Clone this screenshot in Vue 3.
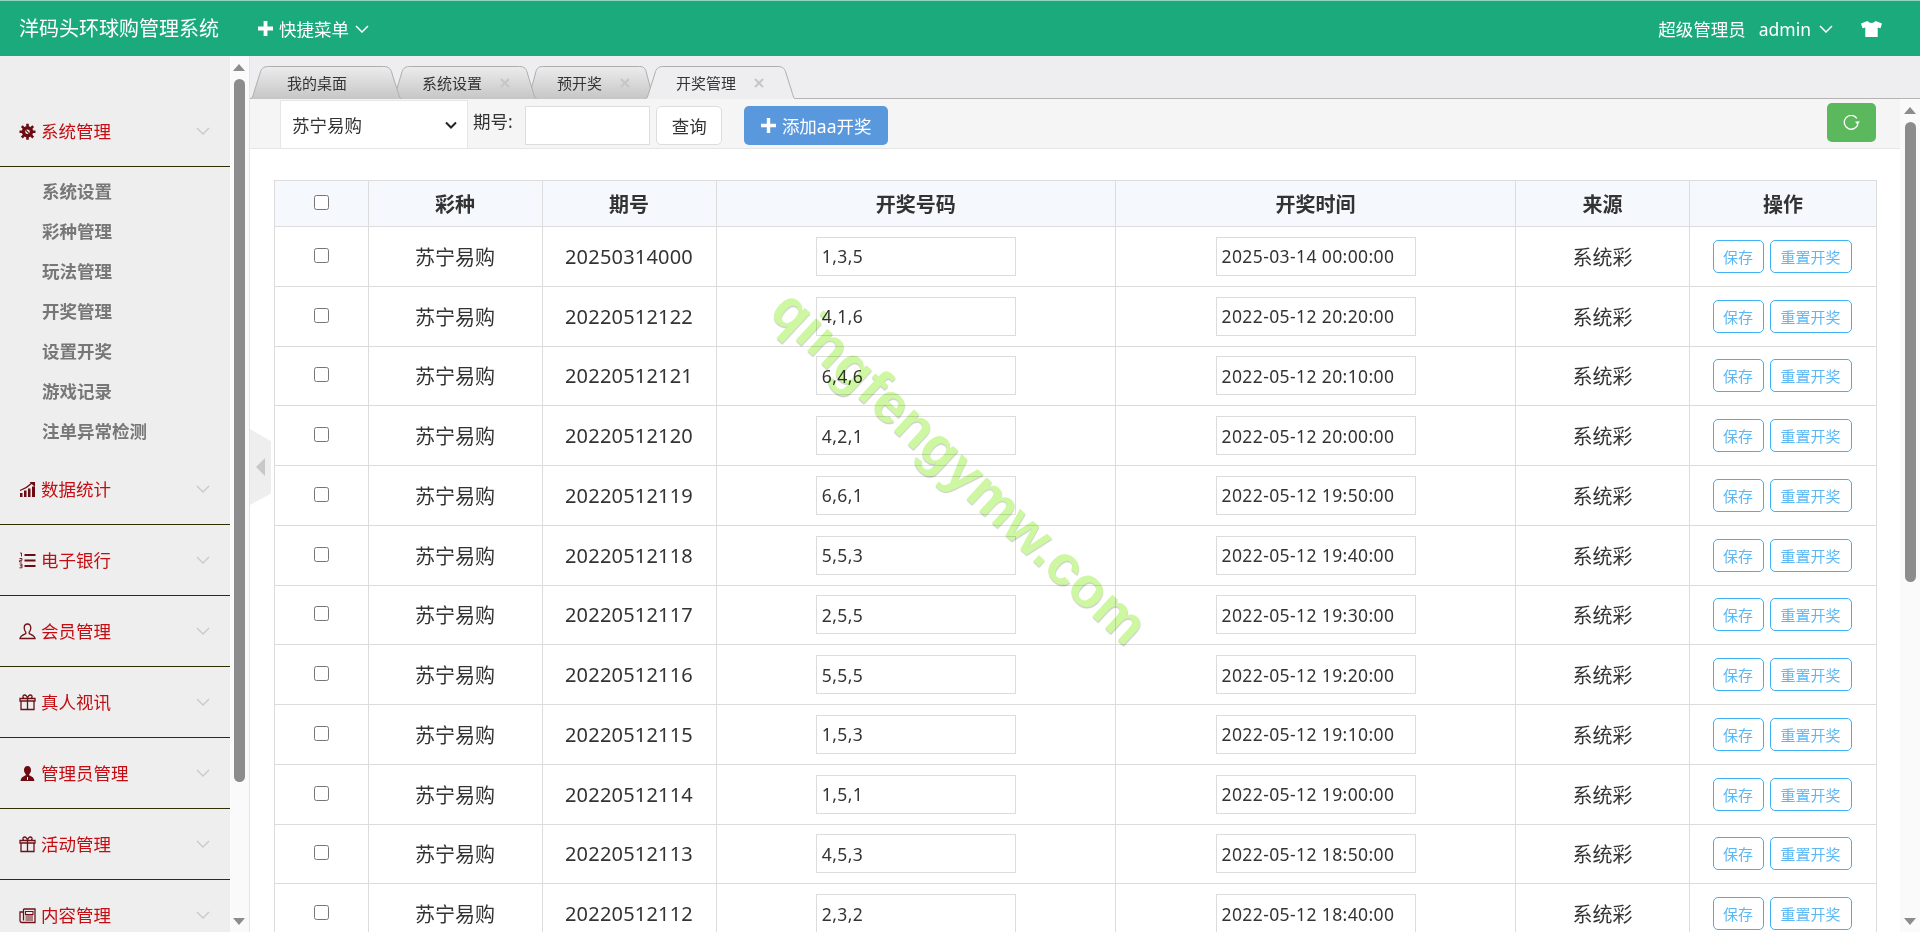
<template>
  <div class="app">
    <header class="top">
      <span class="brand">洋码头环球购管理系统</span>
      <span class="quick">
        <svg class="plus" viewBox="0 0 15 15"><path d="M5.6 0h3.8v5.6H15v3.8H9.4V15H5.6V9.4H0V5.6h5.6z" fill="#fff"/></svg>
        快捷菜单
        <svg class="chev-w" viewBox="0 0 14 8"><path d="M1 1l6 6 6-6" fill="none" stroke="#fff" stroke-width="1.5"/></svg>
      </span>
      <span class="user">
        <span class="role">超级管理员</span>
        <span class="name">admin</span>
        <svg class="chev-w" viewBox="0 0 14 8"><path d="M1 1l6 6 6-6" fill="none" stroke="#fff" stroke-width="1.5"/></svg>
        <svg class="shirt" viewBox="0 0 21 16"><path d="M6.5 0c1 1.3 2.400 2 4 2s3-.7 4-2L21 2.600l-1.500 4.600-2.800-.7V16H4.300V6.500l-2.800.7L0 2.600z" fill="#fff"/></svg>
      </span>
    </header>

    <div class="body">
      <aside class="side">
        <template v-for="m in menus" :key="m.name">
          <div class="menu" :class="{ 'menu--open': m.subs }">
            <svg class="mi" viewBox="0 0 17 17" v-html="m.icon"></svg>
            <span class="mt">{{ m.name }}</span>
            <svg class="chev" viewBox="0 0 14 8"><path d="M1 1l6 6 6-6" fill="none" stroke="#c9c9c9" stroke-width="1.300"/></svg>
          </div>
          <ul v-if="m.subs" class="subs">
            <li v-for="s in m.subs" :key="s">{{ s }}</li>
          </ul>
        </template>
      </aside>
      <div class="track track--side">
        <i class="up"></i>
        <i class="thumb thumb--side"></i>
        <i class="down"></i>
      </div>

      <main class="main">
        <div class="collapse"><i></i></div>

        <nav class="tabs">
          <div
            v-for="(t, i) in tabs"
            :key="t.name"
            class="tab"
            :class="[t.cls, { 'tab--on': t.on }]"
            :style="{ zIndex: t.on ? 9 : 5 - i }"
          >
            <svg class="tab-bg" viewBox="0 0 150 33" preserveAspectRatio="none">
              <defs>
                <linearGradient id="tabgrad" x1="0" y1="0" x2="0" y2="1">
                  <stop offset="0" stop-color="#ececec"/>
                  <stop offset="1" stop-color="#c6c6c6"/>
                </linearGradient>
              </defs>
              <path
                d="M0 33C2 33 3 30 4 26L10 7C11 3 13 .5 18 .5H132C137 .5 139 3 140 7L146 26C147 30 148 33 150 33"
                :fill="t.on ? '#eeeef0' : 'url(#tabgrad)'"
                stroke="#aeaeae"
                vector-effect="non-scaling-stroke"
              />
            </svg>
            <span class="tab-name">{{ t.name }}</span>
            <svg v-if="t.close" class="tab-x" viewBox="0 0 12 12"><path d="M2 2l8 8M10 2l-8 8" stroke="#c6c6ca" stroke-width="2"/></svg>
          </div>
        </nav>

        <div class="page">
          <div class="content">
            <div class="toolbar">
              <div class="sel">
                <select>
                  <option>苏宁易购</option>
                </select>
                <svg viewBox="0 0 12 8"><path d="M1 1.500l5 5 5-5" fill="none" stroke="#222" stroke-width="2"/></svg>
              </div>
              <label class="lbl">期号:</label>
              <input class="q" type="text" />
              <button class="btn-q">查询</button>
              <button class="btn-add">
                <svg viewBox="0 0 15 15"><path d="M5.800 0h3.400v5.800H15v3.400H9.200V15H5.800V9.200H0V5.800h5.800z" fill="#fff"/></svg>
                添加aa开奖
              </button>
              <button class="btn-re">
                <svg viewBox="0 0 18 16"><path d="M13.800 3.300A6.900 6.900 0 1 0 15 8.500" fill="none" stroke="#fff" stroke-width="1.300"/><path d="M12 6.500h5L14.500 9.500z" fill="#fff" transform="rotate(-4 14 8)"/></svg>
              </button>
            </div>

            <div class="wrap">
              <table class="grid">
                <colgroup>
                  <col class="c1" /><col class="c2" /><col class="c2" /><col class="c3" /><col class="c4" /><col class="c2" /><col class="c5" />
                </colgroup>
                <thead>
                  <tr>
                    <th><input type="checkbox" class="ck" /></th>
                    <th>彩种</th>
                    <th>期号</th>
                    <th>开奖号码</th>
                    <th>开奖时间</th>
                    <th>来源</th>
                    <th>操作</th>
                  </tr>
                </thead>
                <tbody>
                  <tr v-for="r in rows" :key="r.no">
                    <td><input type="checkbox" class="ck" /></td>
                    <td>苏宁易购</td>
                    <td class="no">{{ r.no }}</td>
                    <td><input class="cell-in" type="text" :value="r.code" /></td>
                    <td><input class="cell-in" type="text" :value="r.time" /></td>
                    <td>系统彩</td>
                    <td>
                      <div class="ops">
                        <button class="op op--s">保存</button>
                        <button class="op op--r">重置开奖</button>
                      </div>
                    </td>
                  </tr>
                </tbody>
              </table>
            </div>
          </div>
          <div class="track track--main">
            <i class="up"></i>
            <i class="thumb thumb--main"></i>
            <i class="down"></i>
          </div>
        </div>
      </main>
    </div>

    <div class="mark">qingfengymw.com</div>
  </div>
</template>

<script setup>
const gift = '<path d="M2 7h13v8.500H2zM1 4.500h15V7H1zM8.500 4.500v11M5 15.500M5 4.500C3 3 4 1 5.500 1s3 2 3 3.500c0-1.500 1.500-3.500 3-3.500S14 3 12 4.500" fill="none" stroke="#6d1018" stroke-width="1.300"/>'

const menus = [
  {
    name: '系统管理',
    icon: '<path d="M8.500 8.800m-5.700 0a5.700 5.700 0 1 0 11.400 0a5.700 5.700 0 1 0-11.400 0" fill="#6d0a12"/><path d="M8.500 .8v3M8.500 13.800v3M.5 8.800h3M13.500 8.800h3M2.800 3.100l2.200 2.200M12 12.300l2.200 2.200M2.800 14.500l2.200-2.200M12 5.300l2.200-2.200" stroke="#6d0a12" stroke-width="2.600"/><circle cx="8.500" cy="8.800" r="2.300" fill="#eee"/><path d="M7 7.300l3.500 3.500" stroke="#6d0a12" stroke-width="1.200"/>',
    subs: ['系统设置', '彩种管理', '玩法管理', '开奖管理', '设置开奖', '游戏记录', '注单异常检测']
  },
  {
    name: '数据统计',
    icon: '<path d="M1 16v-4h2.500v4zM5 16V9.500h2.500V16zM9 16V7.500h2.500V16zM13 16V5.500h3V16z" fill="#6d0a12"/><path d="M1 9.500C5 8 9 6 13 2" fill="none" stroke="#6d0a12" stroke-width="1.300"/><path d="M10.500 1H16v5z" fill="#6d0a12"/>'
  },
  {
    name: '电子银行',
    icon: '<path d="M5.500 2h11v2h-11zM5.500 7.500h11v2h-11zM5.500 13h11v2h-11z" fill="#6d0a12"/><path d="M1 1h1.500v3.500M.5 6.500H3v1.800H.7V10H3M.5 12H3v1.800H1M3 13.800V15.800H.5" fill="none" stroke="#6d0a12" stroke-width=".9"/>'
  },
  {
    name: '会员管理',
    icon: '<path d="M8.500 1C6.300 1 5.200 2.800 5.200 5c0 1.800.9 3.400 1.600 4.200v1.500C5 11.600 1.500 12.500 1 15.500h15c-.5-3-4-3.900-5.800-4.800V9.200c.7-.8 1.600-2.400 1.600-4.200 0-2.200-1.100-4-3.300-4z" fill="none" stroke="#6d1018" stroke-width="1.300"/>'
  },
  { name: '真人视讯', icon: gift },
  {
    name: '管理员管理',
    icon: '<path d="M8.500 1C6.200 1 5 2.800 5 5c0 2 1 3.500 1.800 4.300v1C5 11.300 2 11.800 1.600 16h13.800c-.4-4.200-3.400-4.700-5.200-5.700v-1C11 8.500 12 7 12 5c0-2.200-1.200-4-3.500-4z" fill="#6d0a12"/><path d="M8.500 12v3" stroke="#eee" stroke-width="1"/>'
  },
  { name: '活动管理', icon: gift },
  {
    name: '内容管理',
    icon: '<path d="M4.500 2H16v13.500H3c-1.200 0-2-.8-2-2V5h3.500M4.500 2v11.500" fill="none" stroke="#6d1018" stroke-width="1.300"/><path d="M6.500 4.500h7.500v3H6.500zM6.500 9h7.500M6.500 11h7.500M6.500 13h7.500" fill="none" stroke="#6d1018" stroke-width="1.100"/>'
  }
]

const tabs = [
  { name: '我的桌面', close: false, on: false, cls: 'tab--home' },
  { name: '系统设置', close: true, on: false, cls: '' },
  { name: '预开奖', close: true, on: false, cls: 'tab--short' },
  { name: '开奖管理', close: true, on: true, cls: '' }
]

const rows = [
  ['20250314000', '1,3,5', '2025-03-14 00:00:00'],
  ['20220512122', '4,1,6', '2022-05-12 20:20:00'],
  ['20220512121', '6,4,6', '2022-05-12 20:10:00'],
  ['20220512120', '4,2,1', '2022-05-12 20:00:00'],
  ['20220512119', '6,6,1', '2022-05-12 19:50:00'],
  ['20220512118', '5,5,3', '2022-05-12 19:40:00'],
  ['20220512117', '2,5,5', '2022-05-12 19:30:00'],
  ['20220512116', '5,5,5', '2022-05-12 19:20:00'],
  ['20220512115', '1,5,3', '2022-05-12 19:10:00'],
  ['20220512114', '1,5,1', '2022-05-12 19:00:00'],
  ['20220512113', '4,5,3', '2022-05-12 18:50:00'],
  ['20220512112', '2,3,2', '2022-05-12 18:40:00']
].map(([no, code, time]) => ({ no, code, time }))
</script>

<style>
html, body { margin: 0; height: 100%; overflow: hidden; }
</style>

<style scoped>
* { box-sizing: border-box; }

.app {
  position: relative;
  height: 932px;
  display: flex;
  flex-direction: column;
  overflow: hidden;
  font-family: "Noto Sans", "Noto Sans CJK SC", sans-serif;
  color: #333;
  background: #fff;
}

input, select, button { font-family: inherit; }

/* top bar */
.top {
  flex: none;
  height: 56px;
  display: flex;
  align-items: center;
  padding: 0 38px 0 19px;
  background: #1aaa7b;
  border-top: 1px solid #8fd6bd;
  color: #fff;
}
.brand { font-size: 20px; line-height: 28px; }
.quick {
  margin-left: 39px;
  display: flex;
  align-items: center;
  font-size: 17.5px;
}
.plus { width: 15px; height: 15px; margin-right: 6px; }
.chev-w { width: 14px; height: 8px; margin-left: 6px; }
.user {
  margin-left: auto;
  display: flex;
  align-items: center;
  font-size: 17.5px;
}
.name { margin-left: 13px; }
.user .chev-w { margin-left: 8px; }
.shirt { width: 21px; height: 16px; margin-left: 28px; }

.body {
  flex: 1;
  min-height: 0;
  display: flex;
}

/* left menu */
.side {
  flex: none;
  width: 230px;
  overflow: hidden;
  padding-top: 40px;
  background: #eee;
}
.menu {
  height: 71px;
  display: flex;
  align-items: center;
  padding: 0 20px 0 19px;
  border-bottom: 1px solid #2e2e00;
  color: #c40d12;
  font-size: 17.5px;
}
.mi { width: 17px; height: 17px; margin-right: 5px; flex: none; }
.mt { line-height: 24px; margin-top: -1px; }
.chev { width: 14px; height: 8px; margin-left: auto; }
.subs {
  list-style: none;
  margin: 0;
  padding: 5px 0 2px 42px;
}
.subs li {
  height: 40px;
  line-height: 39px;
  font-size: 17.5px;
  font-weight: 700;
  color: #777;
}

/* fake scrollbars */
.track {
  flex: none;
  width: 20px;
  display: flex;
  flex-direction: column;
  align-items: center;
  padding: 8px 0 7px;
  background: #fafafa;
}
.track--side { border-right: 1px solid #e4e4e4; padding-right: 1px; }
.up, .down {
  flex: none;
  width: 0;
  height: 0;
  border-left: 6.500px solid transparent;
  border-right: 6.500px solid transparent;
}
.up { border-bottom: 7px solid #8c8c8c; }
.down { border-top: 7px solid #8c8c8c; margin-top: auto; }
.thumb {
  flex: none;
  width: 11px;
  margin-top: 8px;
  border-radius: 6px;
  background: #8c8c8c;
}
.thumb--side { height: 703px; }
.thumb--main { height: 460px; }

/* tabs */
.main {
  position: relative;
  flex: 1;
  min-width: 0;
  display: flex;
  flex-direction: column;
}
.tabs {
  flex: none;
  height: 43px;
  display: flex;
  align-items: flex-end;
  background: #eeeef0;
  border-bottom: 1px solid #b4b4b4;
}
.tab {
  position: relative;
  height: 33px;
  margin-bottom: -1px;
  margin-right: -10px;
  padding: 0 26px 0 30px;
  display: flex;
  align-items: center;
  font-size: 15px;
}
.tab--home { padding: 0 55px 0 37px; }
.tab--short { padding-right: 24px; }
.tab--on { padding: 0 31px 0 31px; }
.tab-bg {
  position: absolute;
  inset: 0;
  width: 100%;
  height: 100%;
}
.tab-name { position: relative; line-height: 20px; }
.tab-x { position: relative; width: 12px; height: 12px; margin-left: 17px; }

.page {
  flex: 1;
  min-height: 0;
  display: flex;
}
.content {
  flex: 1;
  min-width: 0;
  display: flex;
  flex-direction: column;
}

/* filter row */
.toolbar {
  flex: none;
  height: 50px;
  display: flex;
  align-items: flex-start;
  padding: 7px 24px 0 30px;
  background: #f5f5f5;
  border-bottom: 1px solid #e6e6e6;
  font-size: 17.500px;
}
.sel {
  position: relative;
  width: 188px;
  height: 49px;
  margin-top: -6px;
}
.sel select {
  width: 100%;
  height: 100%;
  appearance: none;
  padding: 0 0 0 11px;
  border: 1px solid #e6e6e6;
  border-radius: 0;
  background: #fff;
  color: #333;
  font-size: 17.500px;
  outline: none;
}
.sel svg {
  position: absolute;
  top: 21px;
  right: 11px;
  width: 12px;
  height: 8px;
}
.lbl { margin: -4px 12.500px 0 5px; line-height: 39px; }
.q {
  width: 125px;
  height: 39px;
  border: 1px solid #ddd;
  background: #fff;
}
.btn-q {
  width: 66px;
  height: 39px;
  margin-left: 6px;
  border: 1px solid #ddd;
  border-radius: 5px;
  background: #fff;
  color: #333;
  font-size: 17.500px;
  padding: 0;
}
.btn-add {
  width: 144px;
  height: 39px;
  margin-left: 22px;
  display: flex;
  align-items: center;
  justify-content: center;
  border: 0;
  border-radius: 5px;
  background: #5a98de;
  color: #fff;
  font-size: 17.500px;
  padding: 0;
}
.btn-add svg { width: 15px; height: 15px; margin-right: 6px; }
.btn-re {
  width: 49px;
  height: 39px;
  margin: -3px 0 0 auto;
  display: flex;
  align-items: center;
  justify-content: center;
  border: 0;
  border-radius: 5px;
  background: #5cb85c;
  padding: 0;
}
.btn-re svg { width: 18px; height: 16px; }

/* table */
.wrap {
  flex: 1;
  min-height: 0;
  overflow: hidden;
  padding: 31px 24px 0;
}
.grid {
  width: 1602px;
  table-layout: fixed;
  border-collapse: collapse;
  font-size: 20px;
}
.c1 { width: 93.500px; }
.c2 { width: 174px; }
.c3 { width: 399.500px; }
.c4 { width: 400px; }
.c5 { width: 187px; }
.grid th, .grid td {
  padding: 0;
  text-align: center;
  vertical-align: middle;
  border: 1px solid #dcdcdc;
  color: #333;
}
.grid th {
  height: 46px;
  background: #f5f9fd;
  font-weight: 700;
}
.grid td { height: 59.750px; }
.grid td.no { letter-spacing: .2px; }
.ck {
  display: block;
  width: 15px;
  height: 15px;
  margin: -2px auto 0;
}
.cell-in {
  width: 200px;
  height: 39px;
  padding: 0 5px;
  border: 1px solid #dcdcdc;
  background: #fff;
  color: #333;
  font-size: 17.500px;
  letter-spacing: .4px;
  vertical-align: middle;
  outline: none;
}
.ops {
  display: flex;
  justify-content: center;
  gap: 6px;
  padding-right: 2px;
}
.op {
  height: 33px;
  padding: 0;
  border: 1px solid #3fb1f5;
  border-radius: 5px;
  background: #fff;
  color: #5cb8f5;
  font-size: 15px;
}
.op--s { width: 51px; }
.op--r { width: 82px; }

/* overlays */
.collapse {
  position: absolute;
  top: 373px;
  left: 0;
  width: 21px;
  height: 76px;
  background: #eee;
  clip-path: polygon(0 0, 100% 16%, 100% 85%, 0 100%);
  display: flex;
  align-items: center;
  padding-left: 6px;
}
.collapse i {
  width: 0;
  height: 0;
  border-top: 9px solid transparent;
  border-bottom: 9px solid transparent;
  border-right: 9px solid #c8c8c8;
}
.mark {
  position: absolute;
  left: 960px;
  top: 467px;
  transform: translate(-50%, -50%) rotate(43deg);
  font-family: "Liberation Sans", sans-serif;
  font-size: 56px;
  font-weight: 700;
  line-height: 1;
  white-space: nowrap;
  color: #cdf7a0;
  text-shadow: 1px 1px 1px #ccc;
  mix-blend-mode: multiply;
  pointer-events: none;
}
</style>
